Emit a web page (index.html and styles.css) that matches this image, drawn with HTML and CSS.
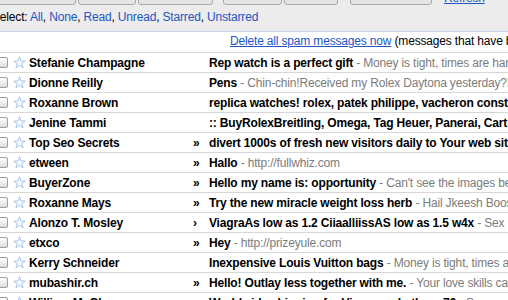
FILE: index.html
```html
<!DOCTYPE html>
<html>
<head>
<meta charset="utf-8">
<link rel="stylesheet" href="styles.css">
</head>
<body>
<div class="toolbar">
  <div class="buttons">
    <div class="btn btn-a"></div>
    <div class="btn btn-b"></div>
    <div class="btn btn-c btn-gap"></div>
    <div class="btn btn-d"></div>
    <div class="btn btn-e btn-gap"></div>
    <div class="btn btn-f"></div>
    <a class="link refresh" href="#">Refresh</a>
  </div>
  <div class="select">Select: <a class="link" href="#">All</a>, <a class="link" href="#">None</a>, <a class="link" href="#">Read</a>, <a class="link" href="#">Unread</a>, <a class="link" href="#">Starred</a>, <a class="link" href="#">Unstarred</a></div>
</div>
<div class="delete-row"><a class="link uline" href="#">Delete all spam messages now</a> (messages that have been in Spam more than 30 days will be automatically deleted)</div>
<div class="list">
  <div class="row"><span class="cb"></span><svg class="star" viewBox="0 0 12 12"><polygon points="6,0.8 7.35,4.54 11.33,4.67 8.19,7.11 9.29,10.93 6,8.7 2.71,10.93 3.81,7.11 0.67,4.67 4.65,4.54"/></svg><span class="sender">Stefanie Champagne</span><span class="mark"></span><span class="subj"><b>Rep watch is a perfect gift</b><span class="snip"> - Money is tight, times are hard, but you still want to look good</span></span></div>
  <div class="row"><span class="cb"></span><svg class="star" viewBox="0 0 12 12"><polygon points="6,0.8 7.35,4.54 11.33,4.67 8.19,7.11 9.29,10.93 6,8.7 2.71,10.93 3.81,7.11 0.67,4.67 4.65,4.54"/></svg><span class="sender">Dionne Reilly</span><span class="mark"></span><span class="subj"><b>Pens</b><span class="snip"> - Chin-chin!Received my Rolex Daytona yesterday?!</span></span></div>
  <div class="row"><span class="cb"></span><svg class="star" viewBox="0 0 12 12"><polygon points="6,0.8 7.35,4.54 11.33,4.67 8.19,7.11 9.29,10.93 6,8.7 2.71,10.93 3.81,7.11 0.67,4.67 4.65,4.54"/></svg><span class="sender">Roxanne Brown</span><span class="mark"></span><span class="subj"><b>replica watches! rolex, patek philippe, vacheron constantin</b></span></div>
  <div class="row"><span class="cb"></span><svg class="star" viewBox="0 0 12 12"><polygon points="6,0.8 7.35,4.54 11.33,4.67 8.19,7.11 9.29,10.93 6,8.7 2.71,10.93 3.81,7.11 0.67,4.67 4.65,4.54"/></svg><span class="sender">Jenine Tammi</span><span class="mark"></span><span class="subj"><b>:: BuyRolexBreitling, Omega, Tag Heuer, Panerai, Cartier</b></span></div>
  <div class="row"><span class="cb"></span><svg class="star" viewBox="0 0 12 12"><polygon points="6,0.8 7.35,4.54 11.33,4.67 8.19,7.11 9.29,10.93 6,8.7 2.71,10.93 3.81,7.11 0.67,4.67 4.65,4.54"/></svg><span class="sender">Top Seo Secrets</span><span class="mark">»</span><span class="subj"><b>divert 1000s of fresh new visitors daily to Your web site</b></span></div>
  <div class="row"><span class="cb"></span><svg class="star" viewBox="0 0 12 12"><polygon points="6,0.8 7.35,4.54 11.33,4.67 8.19,7.11 9.29,10.93 6,8.7 2.71,10.93 3.81,7.11 0.67,4.67 4.65,4.54"/></svg><span class="sender">etween</span><span class="mark">»</span><span class="subj"><b>Hallo</b><span class="snip"> - http://fullwhiz.com</span></span></div>
  <div class="row"><span class="cb"></span><svg class="star" viewBox="0 0 12 12"><polygon points="6,0.8 7.35,4.54 11.33,4.67 8.19,7.11 9.29,10.93 6,8.7 2.71,10.93 3.81,7.11 0.67,4.67 4.65,4.54"/></svg><span class="sender">BuyerZone</span><span class="mark">»</span><span class="subj"><b>Hello my name is: opportunity</b><span class="snip"> - Can't see the images below?</span></span></div>
  <div class="row"><span class="cb"></span><svg class="star" viewBox="0 0 12 12"><polygon points="6,0.8 7.35,4.54 11.33,4.67 8.19,7.11 9.29,10.93 6,8.7 2.71,10.93 3.81,7.11 0.67,4.67 4.65,4.54"/></svg><span class="sender">Roxanne Mays</span><span class="mark">»</span><span class="subj"><b>Try the new miracle weight loss herb</b><span class="snip"> - Hail Jkeesh Boost</span></span></div>
  <div class="row"><span class="cb"></span><svg class="star" viewBox="0 0 12 12"><polygon points="6,0.8 7.35,4.54 11.33,4.67 8.19,7.11 9.29,10.93 6,8.7 2.71,10.93 3.81,7.11 0.67,4.67 4.65,4.54"/></svg><span class="sender">Alonzo T. Mosley</span><span class="mark">›</span><span class="subj"><b>ViagraAs low as 1.2 CiiaalliissAS low as 1.5 w4x</b><span class="snip"> - Sex</span></span></div>
  <div class="row"><span class="cb"></span><svg class="star" viewBox="0 0 12 12"><polygon points="6,0.8 7.35,4.54 11.33,4.67 8.19,7.11 9.29,10.93 6,8.7 2.71,10.93 3.81,7.11 0.67,4.67 4.65,4.54"/></svg><span class="sender">etxco</span><span class="mark">»</span><span class="subj"><b>Hey</b><span class="snip"> - http://prizeyule.com</span></span></div>
  <div class="row"><span class="cb"></span><svg class="star" viewBox="0 0 12 12"><polygon points="6,0.8 7.35,4.54 11.33,4.67 8.19,7.11 9.29,10.93 6,8.7 2.71,10.93 3.81,7.11 0.67,4.67 4.65,4.54"/></svg><span class="sender">Kerry Schneider</span><span class="mark"></span><span class="subj"><b>Inexpensive Louis Vuitton bags</b><span class="snip"> - Money is tight, times are hard</span></span></div>
  <div class="row"><span class="cb"></span><svg class="star" viewBox="0 0 12 12"><polygon points="6,0.8 7.35,4.54 11.33,4.67 8.19,7.11 9.29,10.93 6,8.7 2.71,10.93 3.81,7.11 0.67,4.67 4.65,4.54"/></svg><span class="sender">mubashir.ch</span><span class="mark">»</span><span class="subj"><b>Hello! Outlay less together with me.</b><span class="snip"> - Your love skills can</span></span></div>
  <div class="row"><span class="cb"></span><svg class="star" viewBox="0 0 12 12"><polygon points="6,0.8 7.35,4.54 11.33,4.67 8.19,7.11 9.29,10.93 6,8.7 2.71,10.93 3.81,7.11 0.67,4.67 4.65,4.54"/></svg><span class="sender">William McGhee</span><span class="mark">›</span><span class="subj"><b>Worldwide shipping for Viagra and others 76</b><span class="snip"> - Sex secrets</span></span></div>
</div>
</body>
</html>
```
FILE: styles.css
```css
* { box-sizing: border-box; }
html, body { margin: 0; padding: 0; }
body {
  width: 508px;
  height: 300px;
  overflow: hidden;
  background: #fff;
  color: #000;
  font: 12px/14px "Liberation Sans", Arial, sans-serif;
  letter-spacing: -0.17px;
}
.link { color: #2255c4; text-decoration: none; }
.uline { text-decoration: underline; }

.toolbar {
  display: flex;
  flex-direction: column;
  height: 32px;
  background: #ececec;
  border-bottom: 1px solid #c8d3e3;
}
.buttons {
  display: flex;
  align-items: flex-end;
  flex: none;
  height: 21px;
  margin-top: -16px;
}
.btn {
  flex: none;
  height: 21px;
  margin-right: 2px;
  background: #e4e4e4;
  border: 1px solid #a8a8a8;
  border-radius: 0 0 3px 3px;
}
.btn-gap { margin-right: 10px; }
.btn-a { width: 86px; margin-left: -10px; }
.btn-b { width: 58px; }
.btn-c { width: 75px; }
.btn-d { width: 59px; }
.btn-e { width: 54px; margin-right: 12px; }
.btn-f { width: 82px; margin-right: 12px; }
.refresh { text-decoration: underline; white-space: nowrap; }

.select {
  margin-top: 5px;
  margin-left: -8px;
  white-space: nowrap;
}

.delete-row {
  height: 20px;
  padding-left: 230px;
  padding-top: 1px;
  line-height: 17px;
  white-space: nowrap;
}

.row {
  display: flex;
  align-items: center;
  height: 20px;
  border-top: 1px solid #d6d6d6;
  white-space: nowrap;
}
.cb {
  flex: none;
  width: 11px;
  height: 11px;
  margin-left: -3px;
  border: 1px solid #9c9c9c;
  border-radius: 2px;
  background: linear-gradient(#ffffff, #dedede);
}
.star {
  flex: none;
  width: 13px;
  height: 13px;
  margin-left: 5px;
}
.star polygon {
  fill: #f6f9fe;
  stroke: #a9c4e8;
  stroke-width: 0.9;
  stroke-linejoin: round;
}
.sender {
  flex: none;
  width: 164px;
  margin-left: 3px;
  font-weight: bold;
}
.mark {
  flex: none;
  width: 16px;
  font-weight: bold;
}
.subj { flex: none; }
.subj b { font-weight: bold; }
.snip { color: #7c7c7c; }
```
